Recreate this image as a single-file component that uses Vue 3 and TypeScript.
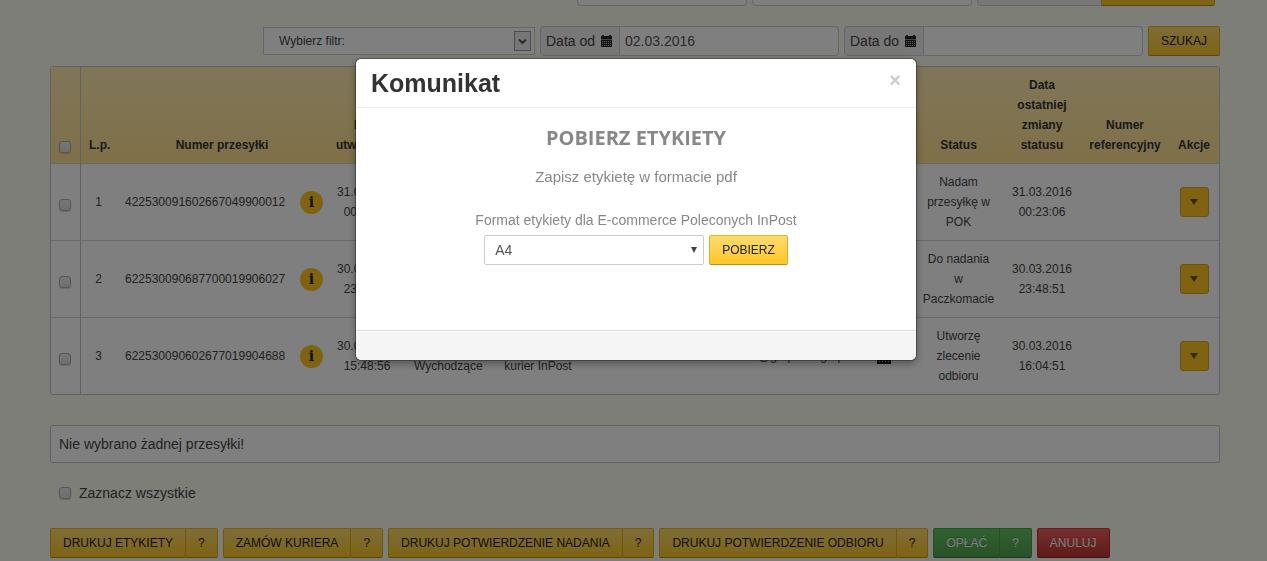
<script setup lang="ts">
import { ref } from 'vue'

interface Shipment {
  id: number
  number: string
  created: [string, string]
  direction: string
  service: string
  email: string
  pickup: boolean
  status: string
  changed: [string, string]
}

const shipments: Shipment[] = [
  { id: 1, number: '422530091602667049900012', created: ['31.03.2016', '00:23:06'], direction: '', service: '', email: '', pickup: false, status: 'Nadam przesyłkę w POK', changed: ['31.03.2016', '00:23:06'] },
  { id: 2, number: '622530090687700019906027', created: ['30.03.2016', '23:48:51'], direction: '', service: '', email: '', pickup: false, status: 'Do nadania w Paczkomacie', changed: ['30.03.2016', '23:48:51'] },
  { id: 3, number: '622530090602677019904688', created: ['30.03.2016', '15:48:56'], direction: 'Wychodzące', service: 'kurier InPost', email: '@grupamaigrup', pickup: true, status: 'Utworzę zlecenie odbioru', changed: ['30.03.2016', '16:04:51'] },
]

const actions = [
  { label: 'DRUKUJ ETYKIETY', tone: 'yellow', help: true },
  { label: 'ZAMÓW KURIERA', tone: 'yellow', help: true },
  { label: 'DRUKUJ POTWIERDZENIE NADANIA', tone: 'yellow', help: true },
  { label: 'DRUKUJ POTWIERDZENIE ODBIORU', tone: 'yellow', help: true },
  { label: 'OPŁAĆ', tone: 'green', help: true },
  { label: 'ANULUJ', tone: 'red', help: false },
]

const dateFrom = ref('02.03.2016')
const dateTo = ref('')
const format = ref('A4')
const open = ref(true)
</script>

<template>
  <div class="page">
    <div class="filters upper">
      <input class="field short" type="text" aria-label="Numer" />
      <input class="field medium" type="text" aria-label="Odbiorca" />
      <div class="joined">
        <span class="addon blank"></span>
        <button type="button" class="btn yellow wide" aria-label="Filtruj"></button>
      </div>
    </div>

    <form class="filters" @submit.prevent>
      <div class="filter-select">
        <select aria-label="Wybierz filtr">
          <option>Wybierz filtr:</option>
        </select>
        <span class="drop">
          <svg width="9" height="7" viewBox="0 0 9 7"><path d="M1 1.5l3.5 3.5L8 1.5" fill="none" stroke="#555" stroke-width="2" /></svg>
        </span>
      </div>
      <div class="joined">
        <label class="addon" for="date-from">Data od
          <svg width="11" height="12" viewBox="0 0 11 12" shape-rendering="crispEdges"><path d="M1 0h2v1h5V0h2v1h1v11H0V1h1z" fill="#222" /><path d="M0 4.5h11" stroke="#888" /><path d="M1 6.5h9M1 8.5h9M1 10.5h9" stroke="#bbb" stroke-dasharray="1 1" /></svg>
        </label>
        <input id="date-from" v-model="dateFrom" class="field date" type="text" />
      </div>
      <div class="joined">
        <label class="addon" for="date-to">Data do
          <svg width="11" height="12" viewBox="0 0 11 12" shape-rendering="crispEdges"><path d="M1 0h2v1h5V0h2v1h1v11H0V1h1z" fill="#222" /><path d="M0 4.5h11" stroke="#888" /><path d="M1 6.5h9M1 8.5h9M1 10.5h9" stroke="#bbb" stroke-dasharray="1 1" /></svg>
        </label>
        <input id="date-to" v-model="dateTo" class="field date" type="text" />
      </div>
      <button type="submit" class="btn yellow">SZUKAJ</button>
    </form>

    <div class="table-frame">
      <table>
        <colgroup>
          <col class="c-check" /><col class="c-lp" /><col class="c-number" /><col class="c-date" />
          <col class="c-direction" /><col class="c-service" /><col /><col class="c-email" /><col class="c-pickup" />
          <col class="c-status" /><col class="c-date" /><col class="c-ref" /><col class="c-action" />
        </colgroup>
        <thead>
          <tr>
            <th class="check"><input type="checkbox" aria-label="Zaznacz wszystkie przesyłki" /></th>
            <th>L.p.</th>
            <th>Numer przesyłki</th>
            <th>Data utworzenia</th>
            <th></th><th></th><th></th><th></th><th></th>
            <th>Status</th>
            <th>Data ostatniej zmiany statusu</th>
            <th>Numer referencyjny</th>
            <th class="tight">Akcje</th>
          </tr>
        </thead>
        <tbody>
          <tr v-for="s in shipments" :key="s.id">
            <td class="check"><input type="checkbox" :aria-label="s.number" /></td>
            <td>{{ s.id }}</td>
            <td class="number-cell"><div class="number"><span>{{ s.number }}</span><span class="info">i</span></div></td>
            <td>{{ s.created[0] }}<br />{{ s.created[1] }}</td>
            <td><template v-if="s.direction"><br />{{ s.direction }}</template></td>
            <td class="nowrap"><template v-if="s.service"><br />{{ s.service }}</template></td>
            <td></td>
            <td class="email">{{ s.email }}</td>
            <td>
              <svg v-if="s.pickup" class="pickup" width="14" height="14" viewBox="0 0 14 14"><path d="M0 1h3V0h1v1h6V0h1v1h3v3H0zM0 5h14v9H0z" fill="#222" /><path d="M2 7.5h10M2 9.5h10M2 11.5h10" stroke="#ccc" stroke-dasharray="1 2" /></svg>
            </td>
            <td>{{ s.status }}</td>
            <td>{{ s.changed[0] }}<br />{{ s.changed[1] }}</td>
            <td></td>
            <td class="tight">
              <button type="button" class="more" aria-label="Akcje">
                <svg width="8" height="6" viewBox="0 0 8 6"><path d="M0 0h8L4 6z" fill="#6b5310" /></svg>
              </button>
            </td>
          </tr>
        </tbody>
      </table>
    </div>

    <p class="notice">Nie wybrano żadnej przesyłki!</p>

    <label class="select-all"><input type="checkbox" />Zaznacz wszystkie</label>

    <div class="actions">
      <div v-for="a in actions" :key="a.label" class="joined">
        <button type="button" class="btn" :class="a.tone">{{ a.label }}</button>
        <button v-if="a.help" type="button" class="btn" :class="a.tone">?</button>
      </div>
    </div>
  </div>

  <div v-if="open" class="backdrop">
    <section class="modal" role="dialog" aria-labelledby="modal-title">
      <header>
        <h3 id="modal-title">Komunikat</h3>
        <button type="button" class="close" aria-label="Zamknij" @click="open = false">×</button>
      </header>
      <div class="modal-body">
        <h4>POBIERZ ETYKIETY</h4>
        <p>Zapisz etykietę w formacie pdf</p>
        <label for="format">Format etykiety dla E-commerce Poleconych InPost</label>
        <div class="download">
          <div class="format">
            <select id="format" v-model="format">
              <option>A4</option>
              <option>A6</option>
            </select>
            <svg width="6" height="6" viewBox="0 0 6 6"><path d="M0 0h6L3 6z" fill="#444" /></svg>
          </div>
          <button type="button" class="btn yellow">POBIERZ</button>
        </div>
      </div>
      <footer></footer>
    </section>
  </div>
</template>

<style>
body {
  margin: 0;
  overflow: hidden;
  background: #fbfcef;
}
</style>

<style scoped>
.page,
.backdrop {
  font-family: "Liberation Sans", Arial, sans-serif;
  font-size: 14px;
  line-height: 20px;
  color: #444;
}
.page *,
.backdrop * {
  box-sizing: border-box;
}
.page {
  height: 100vh;
  overflow: hidden;
  padding: 0 47px 0 50px;
}
button,
input,
select {
  font-family: inherit;
  margin: 0;
}
.filters {
  display: flex;
  justify-content: flex-end;
  gap: 5px;
  height: 30px;
  margin-bottom: 10px;
}
.filters.upper {
  margin: -24px 5px 20px 0;
}
.field {
  height: 30px;
  padding: 4px 5px;
  border: 1px solid #ccc;
  border-radius: 4px;
  background: #fff;
  color: #555;
  font-size: 14px;
}
.short {
  width: 170px;
}
.medium,
.date {
  width: 220px;
}
.joined {
  display: flex;
}
.joined > * + * {
  margin-left: -1px;
  border-top-left-radius: 0;
  border-bottom-left-radius: 0;
}
.joined > :not(:last-child) {
  border-top-right-radius: 0;
  border-bottom-right-radius: 0;
}
.addon {
  display: flex;
  align-items: center;
  justify-content: space-between;
  width: 80px;
  height: 30px;
  padding: 0 7px 0 5px;
  border: 1px solid #ccc;
  border-radius: 4px;
  background: #eee;
  white-space: nowrap;
}
.blank {
  width: 125px;
}
.filter-select {
  position: relative;
  width: 272px;
  height: 28px;
  margin-top: 1px;
}
.filter-select select {
  width: 100%;
  height: 28px;
  padding: 0 30px 0 15px;
  border: 1px solid #ccc;
  border-radius: 0;
  background: #fff;
  color: #444;
  font-size: 12px;
  appearance: none;
}
.drop {
  position: absolute;
  top: 4px;
  right: 4px;
  display: flex;
  align-items: center;
  justify-content: center;
  width: 17px;
  height: 20px;
  border: 1px solid #999;
  background: #eee;
  pointer-events: none;
}
.btn {
  height: 30px;
  padding: 0 12px;
  border: 1px solid;
  border-radius: 2px;
  font-size: 12px;
  line-height: 20px;
  white-space: nowrap;
}
.yellow {
  border-color: #eab41e #e0ac1c #b98d18;
  background: linear-gradient(#fedb71, #ffc726);
  color: #222;
}
.green {
  border-color: #4a9e4a #4a9e4a #387038;
  background: linear-gradient(#62c462, #51a351);
  color: #fff;
  text-shadow: 0 -1px 0 rgba(0, 0, 0, 0.25);
}
.red {
  border-color: #c04040 #b03030 #802420;
  background: linear-gradient(#ee5f5b, #bd362f);
  color: #fff;
  text-shadow: 0 -1px 0 rgba(0, 0, 0, 0.25);
}
.wide {
  width: 114px;
}
.table-frame {
  overflow: hidden;
  border: 1px solid #c4c4c8;
  border-radius: 3px;
}
table {
  width: 100%;
  table-layout: fixed;
  border-collapse: separate;
  border-spacing: 0;
  background: #fff;
  font-size: 12px;
}
thead {
  background: linear-gradient(#ffecb2, #ffe091);
}
th,
td {
  padding: 8px;
  text-align: center;
}
th {
  height: 96px;
  vertical-align: bottom;
  color: #333;
}
td {
  height: 77px;
  border-top: 1px solid #d4d4d6;
  vertical-align: middle;
}
.c-check { width: 30px; }
.c-lp { width: 35px; }
.c-number { width: 212px; }
.c-date { width: 78px; }
.c-direction { width: 84px; }
.c-service { width: 96px; }
.c-email { width: 104px; }
.c-pickup { width: 60px; }
.c-status { width: 89px; }
.c-ref { width: 88px; }
.c-action { width: 50px; }
.check {
  padding: 8px 2px 8px 0;
  border-right: 1px solid #c4c4c8;
}
.tight {
  padding: 8px 4px;
}
.nowrap {
  white-space: nowrap;
}
.email {
  text-align: left;
}
input[type="checkbox"] {
  display: inline-block;
  width: 12px;
  height: 12px;
  border: 1px solid #aaa;
  border-radius: 3px;
  background: linear-gradient(#eee, #ddd);
  box-shadow: 0 1px 1px rgba(0, 0, 0, 0.15);
  appearance: none;
}
.check input {
  margin: 4px 0 0;
  vertical-align: middle;
}
thead .check input {
  vertical-align: bottom;
  margin-bottom: 2px;
}
.number-cell {
  padding: 8px 5px 8px 9px;
}
.number {
  display: flex;
  align-items: center;
  justify-content: space-between;
}
.info {
  width: 23px;
  height: 23px;
  border-radius: 50%;
  background: #ffc726;
  color: #222;
  font: bold 14px/23px "DejaVu Serif", serif;
}
.pickup {
  vertical-align: middle;
}
.more {
  display: inline-flex;
  align-items: center;
  justify-content: center;
  width: 29px;
  height: 30px;
  padding: 0;
  border: 1px solid #d6a41c;
  border-radius: 3px;
  background: #ffc726;
  vertical-align: middle;
}
.notice {
  margin: 30px 0 20px;
  padding: 8px;
  border: 1px solid #c4c4c8;
  border-radius: 2px;
  background: #fff;
}
.select-all {
  display: flex;
  align-items: center;
  gap: 8px;
  margin-bottom: 25px;
  padding-left: 9px;
}
.actions {
  display: flex;
  gap: 5px;
}
.backdrop {
  position: fixed;
  inset: 0;
  display: flex;
  align-items: flex-start;
  justify-content: center;
  padding: 58px 45px 0 50px;
  background: rgba(0, 0, 0, 0.5);
}
.modal {
  width: 562px;
  border: 1px solid rgba(0, 0, 0, 0.3);
  border-radius: 6px;
  background: #fff;
  background-clip: padding-box;
  box-shadow: 0 3px 7px rgba(0, 0, 0, 0.3);
}
header {
  display: flex;
  align-items: flex-start;
  justify-content: space-between;
  padding: 9px 15px;
  border-bottom: 1px solid #eee;
}
h3 {
  margin: 0;
  color: #333;
  font-size: 25px;
  line-height: 30px;
}
.close {
  padding: 0;
  border: 0;
  background: none;
  color: #000;
  font-size: 20px;
  font-weight: bold;
  line-height: 24px;
  opacity: 0.2;
}
.modal-body {
  padding: 15px 15px 65px;
  color: #888;
  text-align: center;
}
h4 {
  margin: 0 0 14px;
  font-family: "Open Sans", sans-serif;
  font-size: 20px;
  line-height: 30px;
}
.modal-body p {
  margin: 0 0 23px;
  font-size: 15px;
}
.modal-body label {
  display: block;
  margin-bottom: 5px;
}
.download {
  display: flex;
  justify-content: center;
  gap: 5px;
}
.format {
  position: relative;
  width: 220px;
}
.format select {
  width: 100%;
  height: 30px;
  padding: 0 24px 0 10px;
  border: 1px solid #ccc;
  border-radius: 2px;
  background: #fff;
  color: #555;
  font-size: 14px;
  appearance: none;
}
.format svg {
  position: absolute;
  top: 12px;
  right: 7px;
  pointer-events: none;
}
footer {
  height: 30px;
  border-top: 1px solid #ddd;
  border-radius: 0 0 6px 6px;
  background: #f5f5f5;
  box-shadow: inset 0 1px 0 #fff;
}
</style>
